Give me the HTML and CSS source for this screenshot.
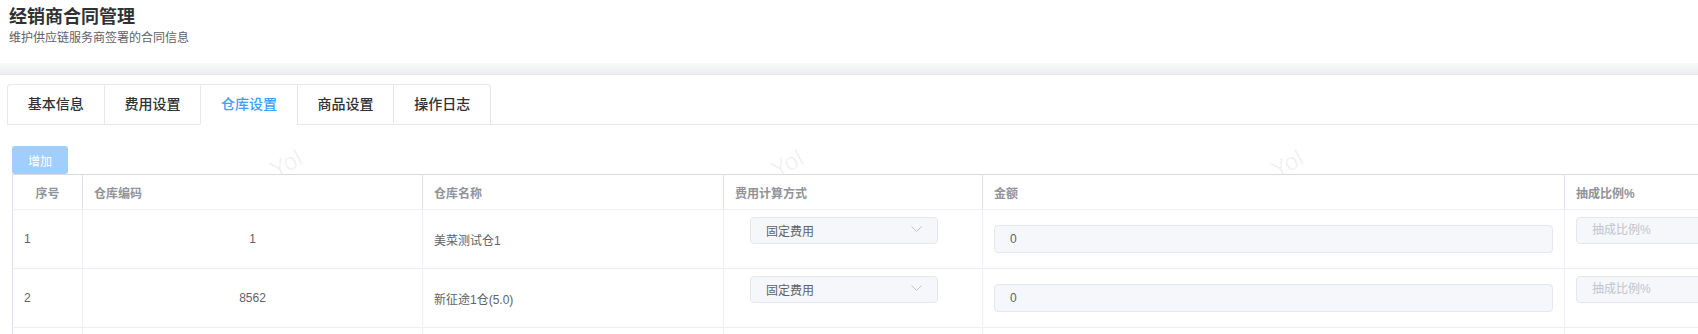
FILE: index.html
```html
<!DOCTYPE html>
<html lang="zh">
<head>
    <meta charset="UTF-8">
    <title>经销商合同管理</title>
    <link rel="stylesheet" href="styles.css">
</head>
<body>

    <div class="page-header">
        <h1>经销商合同管理</h1>
        <p>维护供应链服务商签署的合同信息</p>
    </div>
    <div class="band"></div>

    <div class="content">
        <div class="tabs-header">
            <div class="tabs-nav">
                <div class="tab">基本信息</div>
                <div class="tab">费用设置</div>
                <div class="tab active">仓库设置</div>
                <div class="tab">商品设置</div>
                <div class="tab">操作日志</div>
            </div>
        </div>

        <div class="pane">
            <div class="toolbar">
                <button class="btn-add" disabled>增加</button>
                <span class="mark mark-1">Yol</span>
                <span class="mark mark-2">Yol</span>
                <span class="mark mark-3">Yol</span>
            </div>

            <table class="grid">
                <colgroup>
                    <col style="width: 70px">
                    <col style="width: 340px">
                    <col style="width: 301px">
                    <col style="width: 259px">
                    <col style="width: 582px">
                    <col style="width: 260px">
                </colgroup>
                <thead>
                    <tr>
                        <th class="center">序号</th>
                        <th>仓库编码</th>
                        <th>仓库名称</th>
                        <th>费用计算方式</th>
                        <th>金额</th>
                        <th>抽成比例%</th>
                    </tr>
                </thead>
                <tbody>
                    <tr>
                        <td>1</td>
                        <td class="center">1</td>
                        <td>美菜测试仓1</td>
                        <td>
                            <div class="select">
                                <span>固定费用</span>
                                <svg width="11" height="6" viewBox="0 0 11 6"><path d="M0.5 0.5 L5.5 5.5 L10.5 0.5" fill="none" stroke="#c0c4cc" stroke-width="1"/></svg>
                            </div>
                        </td>
                        <td><div class="input">0</div></td>
                        <td><div class="input rate">抽成比例%</div></td>
                    </tr>
                    <tr>
                        <td>2</td>
                        <td class="center">8562</td>
                        <td>新征途1仓(5.0)</td>
                        <td>
                            <div class="select">
                                <span>固定费用</span>
                                <svg width="11" height="6" viewBox="0 0 11 6"><path d="M0.5 0.5 L5.5 5.5 L10.5 0.5" fill="none" stroke="#c0c4cc" stroke-width="1"/></svg>
                            </div>
                        </td>
                        <td><div class="input">0</div></td>
                        <td><div class="input rate">抽成比例%</div></td>
                    </tr>
                    <tr>
                        <td></td>
                        <td></td>
                        <td></td>
                        <td></td>
                        <td></td>
                        <td></td>
                    </tr>
                </tbody>
            </table>
        </div>
    </div>

</body>
</html>
```

FILE: styles.css
```css
body {
    font-family: "Liberation Sans", "Noto Sans CJK SC", sans-serif;
    margin: 0;
    padding: 0;
    background: #fff;
    color: #606266;
    overflow: hidden;
}

.page-header {
    padding: 7px 9px 0;
    height: 56px;
}

.page-header h1 {
    font-size: 18px;
    line-height: 20px;
    margin: 0;
    color: #303133;
    font-weight: bold;
}

.page-header p {
    font-size: 12px;
    line-height: 16px;
    margin: 3px 0 0;
    color: #606266;
}

.band {
    height: 11px;
    background: linear-gradient(to bottom, #f8f9fa, #eceef1);
    border-bottom: 1px solid #e6e8eb;
}

.content {
    padding: 9px 0 0 7px;
}

.tabs-header {
    border-bottom: 1px solid #e4e7ed;
    display: flex;
}

.tabs-nav {
    display: flex;
    border: 1px solid #e4e7ed;
    border-bottom: none;
    border-radius: 4px 4px 0 0;
    margin-bottom: -1px;
}

.tab {
    width: 95.6px;
    height: 39px;
    line-height: 39px;
    text-align: center;
    font-size: 14px;
    font-weight: 500;
    color: #303133;
    border-left: 1px solid #e4e7ed;
    border-bottom: 1px solid #e4e7ed;
}

.tab:first-child {
    border-left: none;
}

.tab.active {
    color: #409eff;
    border-bottom-color: #fff;
}

.pane {
    padding: 21px 0 0 5px;
}

.toolbar {
    position: relative;
    height: 28px;
}

.btn-add {
    width: 56px;
    height: 28px;
    border: none;
    border-radius: 3px;
    background: #a0cfff;
    color: #fff;
    font-family: inherit;
    font-size: 12px;
    padding: 0;
}

.mark {
    position: absolute;
    top: 4px;
    font-size: 24px;
    color: rgba(0, 0, 0, 0.06);
    transform: rotate(-28deg);
    z-index: 0;
}

.mark-1 { left: 258px; }
.mark-2 { left: 759px; }
.mark-3 { left: 1259px; }

.grid {
    position: relative;
    z-index: 1;
    background: #fff;
    border-collapse: collapse;
    table-layout: fixed;
    width: 1812px;
    font-size: 12px;
    border-left: 1px solid #dcdfe6;
    border-top: 1px solid #d9d9d9;
}

.grid th {
    height: 34px;
    text-align: left;
    padding: 0 11px;
    color: #909399;
    font-weight: bold;
    border-right: 1px solid #dcdfe6;
    border-bottom: 1px solid #ebeef5;
}

.grid td {
    height: 58px;
    padding: 0 11px;
    color: #606266;
    border-right: 1px solid #ebeef5;
    border-bottom: 1px solid #ebeef5;
}

.grid .center {
    text-align: center;
}

.select {
    height: 25px;
    margin: 0 0 17px 15px;
    border: 1px solid #e4e7ed;
    border-radius: 4px;
    background: #f5f7fa;
    display: flex;
    align-items: center;
    justify-content: space-between;
    padding: 0 15px;
    width: 156px;
}

.select svg {
    margin-top: -3px;
}

.input {
    height: 26px;
    line-height: 26px;
    border: 1px solid #e4e7ed;
    border-radius: 4px;
    background: #f5f7fa;
    padding: 0 15px;
    color: #606266;
}

.input.rate {
    height: 25px;
    line-height: 25px;
    width: 160px;
    color: #c0c4cc;
    margin-bottom: 17px;
}
```
